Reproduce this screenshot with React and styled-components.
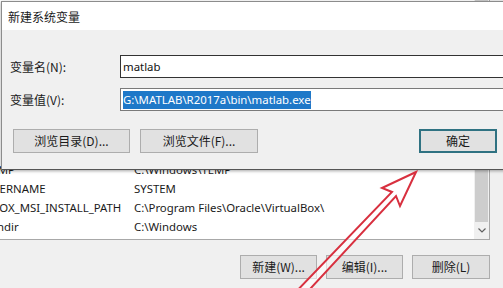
import styled, { createGlobalStyle } from "styled-components";

const GlobalStyle = createGlobalStyle`
  html, body {
    margin: 0;
    padding: 0;
    background: #f0f0f0;
  }
  body {
    font-family: "Noto Sans", "Noto Sans CJK SC", sans-serif;
    color: #111;
  }
`;

const Screen = styled.div`
  position: relative;
  width: 503px;
  height: 288px;
  overflow: hidden;
  background: #f0f0f0;
`;

const BackWindow = styled.div`
  display: flex;
  flex-direction: column;
`;

const ListView = styled.div`
  display: flex;
  height: 239px;
  width: 489px;
  background: #fff;
  border-right: 1px solid #a8a8a8;
  border-bottom: 1px solid #a8a8a8;
`;

const Rows = styled.div`
  flex: 1;
  display: flex;
  flex-direction: column;
  justify-content: flex-end;
  padding-bottom: 3px;
  overflow: hidden;
`;

const Row = styled.div`
  display: grid;
  grid-template-columns: 149px 1fr;
  margin-left: -15px;
  height: 19px;
  align-items: center;
  font-size: 11.4px;
  white-space: nowrap;
  color: #1a1a1a;
`;

const Scrollbar = styled.div`
  width: 15px;
  display: flex;
  flex-direction: column;
  background: #f0f0f0;
`;

const Thumb = styled.div`
  flex: 1;
  margin: 0 1px;
  background: #cdcdcd;
`;

const ArrowButton = styled.div`
  height: 17px;
  display: flex;
  align-items: center;
  justify-content: center;
`;

const ButtonBar = styled.div`
  display: flex;
  justify-content: flex-end;
  gap: 9px;
  padding: 15px 13px 0 0;
`;

const Button = styled.button`
  width: ${(p) => p.$w || 78}px;
  height: 24px;
  padding: 0;
  background: #e1e1e1;
  border: ${(p) => (p.$default ? "2px solid #2f7282" : "1px solid #adadad")};
  font-family: "Noto Sans CJK SC", "Noto Sans", sans-serif;
  font-size: 12px;
  line-height: 1;
  color: #1a1a1a;
  flex-shrink: 0;
`;

const Dialog = styled.div`
  position: absolute;
  top: 1px;
  left: 1px;
  width: 600px;
  border: 1px solid #8c8c8c;
  border-bottom-color: #555;
  background: #f0f0f0;
  box-shadow: 0 1px 3px rgba(0, 0, 0, 0.35);
`;

const TitleBar = styled.div`
  height: 28px;
  display: flex;
  align-items: center;
  padding-left: 6px;
  background: #fff;
  font-family: "Noto Sans CJK SC", sans-serif;
  font-size: 12px;
  color: #1a1a1a;
`;

const Body = styled.div`
  display: flex;
  flex-direction: column;
  gap: 10px;
  padding: 25px 17px 16px 8px;
`;

const Field = styled.div`
  display: grid;
  grid-template-columns: 110px 1fr;
  align-items: center;
`;

const Label = styled.label`
  font-family: "Noto Sans CJK SC", sans-serif;
  font-size: 12px;
  color: #1a1a1a;
`;

const Input = styled.div`
  height: 21px;
  display: flex;
  align-items: center;
  padding: 0 2px;
  background: #fff;
  border: 1px solid ${(p) => (p.$focused ? "#7a7a7a" : "#333")};
  font-size: 11.4px;
  color: #111;
  white-space: nowrap;
`;

const Selected = styled.span`
  background: #1e78c8;
  color: #fff;
  line-height: 18px;
`;

const Actions = styled.div`
  display: flex;
  gap: 10px;
  margin-top: 8px;
  padding-left: 3px;
`;

const Spacer = styled.div`
  flex: 1;
`;

const Overlay = styled.svg`
  position: absolute;
  inset: 0;
  pointer-events: none;
`;

const rows = [
  ["TEMP", "C:\\Windows\\TEMP"],
  ["USERNAME", "SYSTEM"],
  ["VBOX_MSI_INSTALL_PATH", "C:\\Program Files\\Oracle\\VirtualBox\\"],
  ["windir", "C:\\Windows"],
];

export default function App() {
  return (
    <>
      <GlobalStyle />
      <Screen>
        <BackWindow>
          <ListView>
            <Rows>
              {rows.map(([name, value]) => (
                <Row key={name}>
                  <span>{name}</span>
                  <span>{value}</span>
                </Row>
              ))}
            </Rows>
            <Scrollbar>
              <Thumb />
              <ArrowButton>
                <svg width="8" height="5" viewBox="0 0 8 5">
                  <path d="M0.5 0.5 L4 4 L7.5 0.5" fill="none" stroke="#606060" strokeWidth="1.2" />
                </svg>
              </ArrowButton>
            </Scrollbar>
          </ListView>
          <ButtonBar>
            <Button $w={77}>新建(W)...</Button>
            <Button $w={77}>编辑(I)...</Button>
            <Button $w={78}>删除(L)</Button>
          </ButtonBar>
        </BackWindow>

        <Dialog>
          <TitleBar>新建系统变量</TitleBar>
          <Body>
            <Field>
              <Label>变量名(N):</Label>
              <Input>matlab</Input>
            </Field>
            <Field>
              <Label>变量值(V):</Label>
              <Input $focused>
                <Selected>G:\MATLAB\R2017a\bin\matlab.exe</Selected>
              </Input>
            </Field>
            <Actions>
              <Button $w={117}>浏览目录(D)...</Button>
              <Button $w={118}>浏览文件(F)...</Button>
              <Spacer />
              <Button $w={78} $default>确定</Button>
              <Button $w={78}>取消</Button>
            </Actions>
          </Body>
        </Dialog>

        <Overlay width="503" height="288" viewBox="0 0 503 288">
          <path
            d="M416 172 L382 188 L392 192 L290 298 L298 302 L396 196 L400 206 Z"
            fill="rgba(255,255,255,0.6)"
            stroke="#d8303f"
            strokeWidth="2"
            strokeLinejoin="miter"
          />
        </Overlay>
      </Screen>
    </>
  );
}
